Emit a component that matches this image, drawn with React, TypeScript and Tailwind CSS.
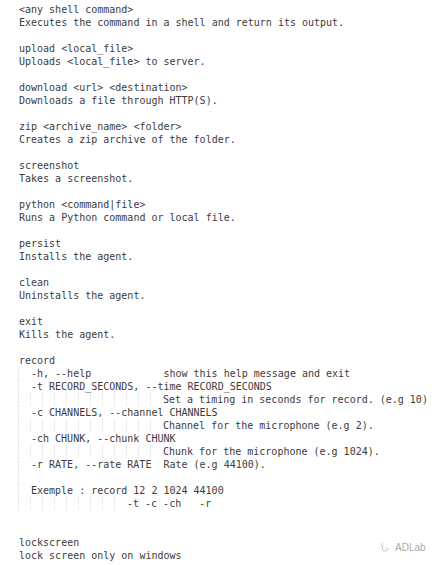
type Line = { guides?: number; text: string }

const lines: Line[] = [
  { text: '<any shell command>' },
  { text: 'Executes the command in a shell and return its output.' },
  { text: '' },
  { text: 'upload <local_file>' },
  { text: 'Uploads <local_file> to server.' },
  { text: '' },
  { text: 'download <url> <destination>' },
  { text: 'Downloads a file through HTTP(S).' },
  { text: '' },
  { text: 'zip <archive_name> <folder>' },
  { text: 'Creates a zip archive of the folder.' },
  { text: '' },
  { text: 'screenshot' },
  { text: 'Takes a screenshot.' },
  { text: '' },
  { text: 'python <command|file>' },
  { text: 'Runs a Python command or local file.' },
  { text: '' },
  { text: 'persist' },
  { text: 'Installs the agent.' },
  { text: '' },
  { text: 'clean' },
  { text: 'Uninstalls the agent.' },
  { text: '' },
  { text: 'exit' },
  { text: 'Kills the agent.' },
  { text: '' },
  { text: 'record' },
  { guides: 1, text: '-h, --help            show this help message and exit' },
  { guides: 1, text: '-t RECORD_SECONDS, --time RECORD_SECONDS' },
  { guides: 12, text: 'Set a timing in seconds for record. (e.g 10)' },
  { guides: 1, text: '-c CHANNELS, --channel CHANNELS' },
  { guides: 12, text: 'Channel for the microphone (e.g 2).' },
  { guides: 1, text: '-ch CHUNK, --chunk CHUNK' },
  { guides: 12, text: 'Chunk for the microphone (e.g 1024).' },
  { guides: 1, text: '-r RATE, --rate RATE  Rate (e.g 44100).' },
  { guides: 1, text: '' },
  { guides: 1, text: 'Exemple : record 12 2 1024 44100' },
  { guides: 9, text: '-t -c -ch   -r' },
  { text: '' },
  { text: '' },
  { text: 'lockscreen' },
  { text: 'lock screen only on windows' },
]

function CodeLine({ line }: { line: Line }) {
  const guides = Array.from({ length: line.guides ?? 0 })
  return (
    <div className="h-[13px] leading-[13px] whitespace-pre flex">
      {guides.map((_, i) => (
        <span
          key={i}
          className="inline-block w-[12px] h-[13px] shrink-0 border-l border-dotted border-[#dadada] -translate-x-px"
        />
      ))}
      <span>{line.text || ' '}</span>
    </div>
  )
}

export default function App() {
  return (
    <div className="relative min-h-screen bg-white">
      <div
        className="pt-[3px] pl-[19px] text-[10px] text-[#3c3c3c]"
        style={{ fontFamily: '"DejaVu Sans Mono", "Liberation Mono", monospace' }}
      >
        {lines.map((line, i) => (
          <CodeLine key={i} line={line} />
        ))}
      </div>

      {/* watermark */}
      <div className="absolute left-[380px] top-[542px] flex items-center gap-[4px] text-[#a8a8a8]">
        <svg width="11" height="11" viewBox="0 0 12 12" fill="none" stroke="#bdbdbd" strokeWidth="1">
          <path d="M4 3.5 A3.5 3.5 0 1 0 9.5 6.5" />
          <circle cx="6.5" cy="6.5" r="0.8" fill="#bdbdbd" stroke="none" />
          <path d="M1 2 L2.2 3.2 M0.5 5 H2 M2.5 0.5 L3 2" />
        </svg>
        <span className="text-[10px] leading-none" style={{ fontFamily: '"Liberation Sans", Arial, sans-serif' }}>
          ADLab
        </span>
      </div>
    </div>
  )
}
